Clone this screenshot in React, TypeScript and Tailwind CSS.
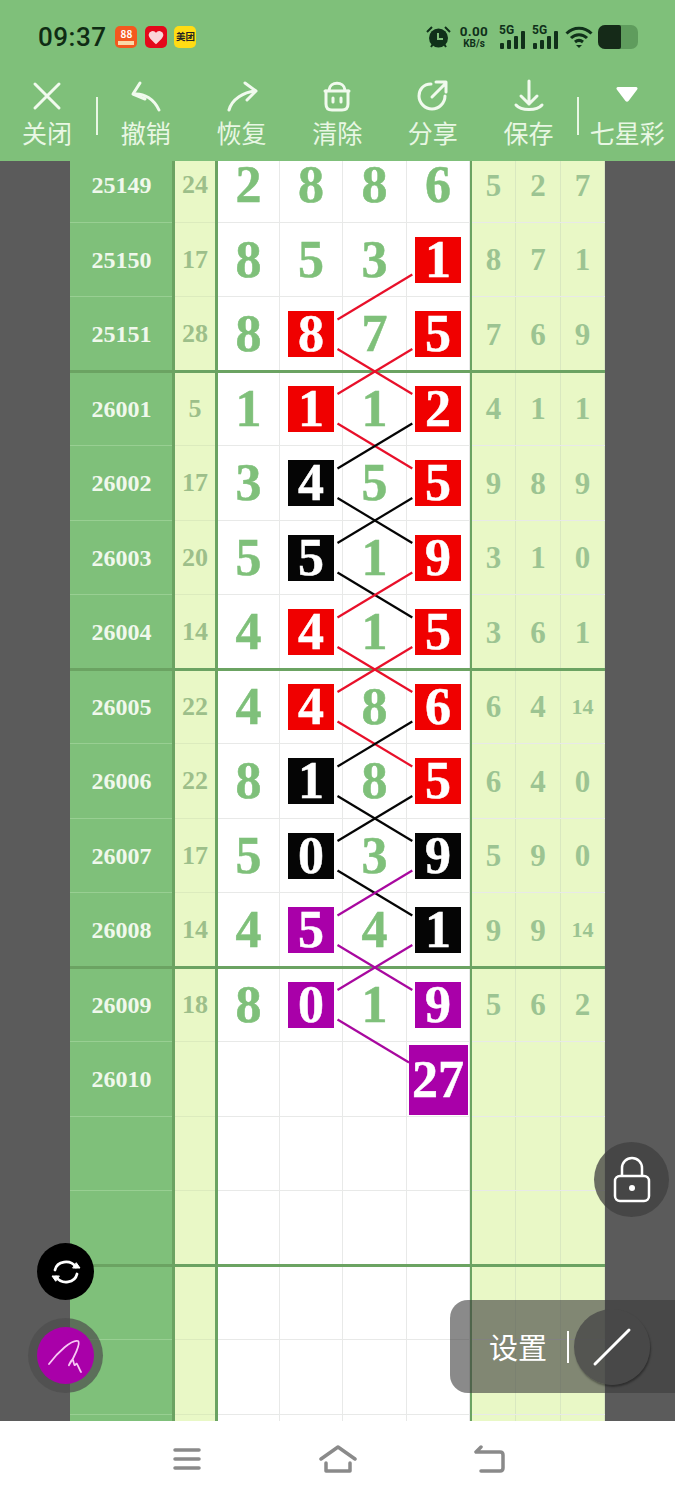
import { ReactNode } from 'react';

type Mark = 'r' | 'k' | 'p' | '';

type Row = {
  id: string;
  sum: string;
  nums: string[];
  marks: Mark[];
  right: string[];
};

const row = (id: string, sum: string, a: string, b: string, c: string, d: string, bm: Mark, dm: Mark, right: string[]): Row => ({
  id,
  sum,
  nums: [a, b, c, d],
  marks: ['', bm, '', dm],
  right,
});

const rows: Row[] = [
  row('25149', '24', '2', '8', '8', '6', '', '', ['5', '2', '7']),
  row('25150', '17', '8', '5', '3', '1', '', 'r', ['8', '7', '1']),
  row('25151', '28', '8', '8', '7', '5', 'r', 'r', ['7', '6', '9']),
  row('26001', '5', '1', '1', '1', '2', 'r', 'r', ['4', '1', '1']),
  row('26002', '17', '3', '4', '5', '5', 'k', 'r', ['9', '8', '9']),
  row('26003', '20', '5', '5', '1', '9', 'k', 'r', ['3', '1', '0']),
  row('26004', '14', '4', '4', '1', '5', 'r', 'r', ['3', '6', '1']),
  row('26005', '22', '4', '4', '8', '6', 'r', 'r', ['6', '4', '14']),
  row('26006', '22', '8', '1', '8', '5', 'k', 'r', ['6', '4', '0']),
  row('26007', '17', '5', '0', '3', '9', 'k', 'k', ['5', '9', '0']),
  row('26008', '14', '4', '5', '4', '1', 'p', 'k', ['9', '9', '14']),
  row('26009', '18', '8', '0', '1', '9', 'p', 'p', ['5', '6', '2']),
  row('26010', '', '', '', '', '27', '', 'p', ['', '', '']),
  row('', '', '', '', '', '', '', '', ['', '', '']),
  row('', '', '', '', '', '', '', '', ['', '', '']),
  row('', '', '', '', '', '', '', '', ['', '', '']),
  row('', '', '', '', '', '', '', '', ['', '', '']),
  row('', '', '', '', '', '', '', '', ['', '', '']),
];

const RED = '#e8102a';
const BLACK = '#050505';
const PURPLE = '#a8089f';

// [row index, left-to-right colour, right-to-left colour]
const crossings: [number, string, string][] = [
  [1, '', RED],
  [2, RED, RED],
  [3, RED, BLACK],
  [4, BLACK, BLACK],
  [5, BLACK, RED],
  [6, RED, RED],
  [7, RED, BLACK],
  [8, BLACK, BLACK],
  [9, BLACK, PURPLE],
  [10, PURPLE, PURPLE],
];

const markClass = {
  r: 'bg-[#f00000]',
  k: 'bg-[#050505]',
  p: 'bg-[#a900a9]',
};

function Cell({ value, mark }: { value: string; mark: Mark }) {
  if (value === '27') {
    return (
      <div className="flex items-center justify-center border-r border-[#e8e9e8] bg-white pt-[2px]">
        <div className="flex h-[70px] w-[59px] shrink-0 items-center justify-center bg-[#a900a9] text-[52px] font-bold text-white [-webkit-text-stroke:0.5px_currentColor]">27</div>
      </div>
    );
  }
  return (
    <div className="flex items-center justify-center border-r border-[#e8e9e8] bg-white pt-px">
      {mark ? (
        <div className={`flex h-[46px] w-[46px] items-center justify-center text-[52px] font-bold text-white [-webkit-text-stroke:0.5px_currentColor] ${markClass[mark]}`}>{value}</div>
      ) : (
        <span className="text-[52px] font-bold text-[#7fc07a] [-webkit-text-stroke:0.5px_currentColor]">{value}</span>
      )}
    </div>
  );
}

function TableRow({ data, index }: { data: Row; index: number }) {
  const thick = (index + 2) % 4 === 0;
  return (
    <div className="relative grid h-[74.5px] grid-cols-[102px_3px_40px_3px_62px_63px_64px_63px_2px_44px_45px_44px] border-b border-[#e8e9e8] leading-none">
      <div className="-mb-px flex items-center justify-center border-b border-[#98cf92] bg-[#7fc07a] pl-px pt-px text-[24px] font-bold text-[#f0f8ec]">{data.id}</div>
      <div className="-mb-px bg-[#6ba362]" />
      <div className="-mb-px flex items-center justify-center border-b border-[#dcebbd] bg-[#e9f8c6] pt-px text-[26px] font-bold text-[#9dbf8a]">{data.sum}</div>
      <div className="-mb-px bg-[#6ba362]" />
      {data.nums.map((n, i) => (
        <Cell key={i} value={n} mark={data.marks[i]} />
      ))}
      <div className="-mb-px bg-[#6ba362]" />
      {data.right.map((n, i) => (
        <div
          key={i}
          className={`flex items-center justify-center border-r border-[#d9e8c0] bg-[#e9f8c6] pt-px font-bold text-[#9cc492] ${n === '14' ? 'text-[22px]' : 'text-[31px]'}`}
        >
          {n}
        </div>
      ))}
      {thick && <div className="absolute inset-x-0 -bottom-[2px] z-[1] h-[3px] bg-[#6ba362]" />}
    </div>
  );
}

function LinkLines() {
  const x1 = 337.5;
  const x2 = 412.3;
  const cy = (i: number) => 185 + 74.5 * i;
  return (
    <svg className="pointer-events-none absolute left-0 top-0 z-[2]" width="675" height="1500" fill="none" strokeWidth="2.2">
      {crossings.map(([i, down, up]) => (
        <g key={i}>
          {down && <line x1={x1} y1={cy(i) + 15} x2={x2} y2={cy(i) + 60} stroke={down} />}
          {up && <line x1={x2} y1={cy(i) + 15} x2={x1} y2={cy(i) + 60} stroke={up} />}
        </g>
      ))}
      <line x1={x1} y1={cy(11) + 15} x2={409} y2={cy(11) + 58} stroke={PURPLE} />
    </svg>
  );
}

function Tool({ label, children }: { label: string; children: ReactNode }) {
  return (
    <div className="flex w-[96px] flex-col items-center">
      <svg width="36" height="36" viewBox="0 0 36 36" fill="none" stroke="#f1faee" strokeWidth="3" strokeLinecap="round" strokeLinejoin="round">
        {children}
      </svg>
      <span className="mt-[1px] text-[25px] leading-[34px] text-[#e9f7e4]">{label}</span>
    </div>
  );
}

function Signal() {
  return (
    <svg width="26" height="26" viewBox="0 0 26 26" fill="#10301a">
      <text x="0" y="10" fontSize="12" fontWeight="700" fontFamily="Roboto, sans-serif">5G</text>
      <rect x="1" y="19" width="4" height="6" rx="1" />
      <rect x="8" y="16" width="4" height="9" rx="1" />
      <rect x="15" y="12" width="4" height="13" rx="1" />
      <rect x="22" y="7" width="4" height="18" rx="1" />
    </svg>
  );
}

function StatusBar() {
  return (
    <div className="flex h-[30px] items-center justify-between pl-[38px] pr-[37px]">
      <div className="flex items-center">
        <span className="text-[26px] font-medium leading-none tracking-[0.5px] text-[#0f2c14] font-['Roboto',sans-serif]">09:37</span>
        <div className="ml-[9px] flex h-[22px] w-[22px] flex-col items-center justify-center rounded-[5px] bg-[#f4581f] text-[8px] font-bold leading-none text-white">
          <span className="text-[10px]">88</span>
          <span className="mt-[2px] h-[4px] w-[16px] bg-[#fbd9a8]" />
        </div>
        <div className="ml-[8px] flex h-[22px] w-[22px] items-center justify-center rounded-[5px] bg-[#e4081a]">
          <svg width="16" height="15" viewBox="0 0 24 22" fill="#fbd5d8">
            <path d="M12 21C5 15 1 11 1 7a6 6 0 0 1 11-3 6 6 0 0 1 11 3c0 4-4 8-11 14z" />
          </svg>
        </div>
        <div className="ml-[7px] flex h-[22px] w-[22px] items-center justify-center rounded-[5px] bg-[#ffdc14] text-[9.5px] font-bold leading-none text-[#222]">美团</div>
      </div>
      <div className="flex items-center">
        <svg width="25" height="24" viewBox="0 0 25 24" fill="#10301a">
          <circle cx="12.5" cy="13" r="9.5" />
          <path d="M1 7l5-5M24 7l-5-5M5 22l2-3M20 22l-2-3" stroke="#10301a" strokeWidth="2" />
          <path d="M12 8v6h5" stroke="#7fc07a" strokeWidth="2" fill="none" />
        </svg>
        <div className="ml-[8px] flex w-[30px] flex-col items-center font-bold leading-none text-[#10301a] font-['Roboto',sans-serif]">
          <span className="text-[13.5px] tracking-[0.3px]">0.00</span>
          <span className="text-[10px]">KB/s</span>
        </div>
        <div className="ml-[10px]">
          <Signal />
        </div>
        <div className="ml-[7px]">
          <Signal />
        </div>
        <svg className="ml-[7px]" width="28" height="24" viewBox="0 0 28 24" fill="none" stroke="#10301a" strokeWidth="3">
          <path d="M1.500 8.500c7-7 18-7 25 0" />
          <path d="M6 13c4.500-4.500 11.500-4.500 16 0" />
          <path d="M10 17c2.400-2 5.600-2 8 0" />
          <path d="M14 23l-3-3h6z" fill="#10301a" stroke="none" />
        </svg>
        <div className="ml-[5px] flex h-[24px] w-[40px] overflow-hidden rounded-[7px] bg-[#5f9c5d]">
          <div className="h-full w-[23px] rounded-r-[2px] bg-[#152a18]" />
        </div>
      </div>
    </div>
  );
}

function Toolbar() {
  return (
    <div className="mt-[26px] flex items-start">
      <div className="-ml-px">
        <Tool label="关闭">
          <path d="M6 6l24 24M30 6L6 30" />
        </Tool>
      </div>
      <div className="mt-[19px] ml-px h-[38px] w-[2px] bg-[#e9f7e4]" />
      <Tool label="撤销">
        <path d="M12 5L5 16l12 5" />
        <path d="M6 16c10-1 20 5 25 16" />
      </Tool>
      <Tool label="恢复">
        <path d="M21 5l11 8-9 9" />
        <path d="M31 13C20 14 8 21 5 32" />
      </Tool>
      <Tool label="清除">
        <path d="M6 13h24M10 12c1-9 15-9 16 0" />
        <path d="M7 13v13c0 4 2 6 6 6h10c4 0 6-2 6-6V13" />
        <path d="M14 20v4M22 20v4" />
      </Tool>
      <Tool label="分享">
        <path d="M16 6C8 6 4 12 4 18c0 7 6 13 13 13s13-6 13-13" />
        <path d="M17 19L31 5M21 4h10v10" />
      </Tool>
      <Tool label="保存">
        <path d="M18 3v23M10 18l8 8 8-8" />
        <path d="M5 27c5 6 21 6 26 0" />
      </Tool>
      <div className="mt-[19px] ml-px h-[38px] w-[2px] bg-[#e9f7e4]" />
      <div className="flex w-[96px] flex-col items-center">
        <svg width="36" height="36" viewBox="0 0 36 36" fill="#ffffff">
          <path d="M9 9h18c1.500 0 2 1.500 1.200 2.500L19.500 23c-.8 1-2.200 1-3 0L7.800 11.500C7 10.500 7.500 9 9 9z" />
        </svg>
        <span className="mt-[1px] text-[25px] leading-[34px] text-[#e9f7e4]">七星彩</span>
      </div>
    </div>
  );
}

export default function App() {
  return (
    <div className="relative flex h-[1500px] w-[675px] flex-col overflow-hidden bg-white font-['Noto_Sans_CJK_SC',sans-serif]">
      <header className="z-10 h-[161px] shrink-0 bg-[#7fc07a] pt-[22px]">
        <StatusBar />
        <Toolbar />
      </header>

      <main className="h-[1260px] shrink-0 overflow-hidden bg-[#5b5b5b] pl-[70px] font-['Liberation_Serif',serif]">
        <div className="-mt-[13px] w-[535px]">
          {rows.map((r, i) => (
            <TableRow key={i} data={r} index={i} />
          ))}
        </div>
      </main>

      <nav className="z-10 flex h-[79px] shrink-0 items-center bg-white pb-[4px]">
        <svg className="ml-[172px]" width="30" height="24" viewBox="0 0 30 24" fill="none" stroke="#8a8a8a" strokeWidth="3.500" strokeLinecap="round">
          <path d="M3 3h24M3 12h24M3 21h24" />
        </svg>
        <svg className="ml-[117px]" width="38" height="30" viewBox="0 0 38 30" fill="none" stroke="#8a8a8a" strokeWidth="3.500" strokeLinecap="round" strokeLinejoin="round">
          <path d="M2 15L19 3l17 12" />
          <path d="M7 19v8h24v-8" />
        </svg>
        <svg className="ml-[116px]" width="32" height="28" viewBox="0 0 32 28" fill="none" stroke="#8a8a8a" strokeWidth="3.500" strokeLinecap="round" strokeLinejoin="round">
          <path d="M8 2L3 7h24c2 0 3 1 3 3v13c0 2-1 3-3 3H8" />
        </svg>
      </nav>

      <LinkLines />

      {/* floating buttons */}
      <div className="absolute left-[37px] top-[1243px] z-20 flex h-[57px] w-[57px] items-center justify-center rounded-full bg-black">
        <svg width="32" height="32" viewBox="0 0 32 32" fill="none" stroke="#fff" strokeWidth="2.800" strokeLinecap="round">
          <path d="M5 14C7 5 20 3 26 11" />
          <path d="M27 18C25 27 12 29 6 21" />
          <path d="M23 12h7l-3.500-5zM9 20H2l3.500 5z" fill="#fff" strokeWidth="1" />
        </svg>
      </div>
      <div className="absolute left-[28px] top-[1318px] z-20 flex h-[75px] w-[75px] items-center justify-center rounded-full bg-[#4d4d4d]/70">
        <div className="flex h-[57px] w-[57px] items-center justify-center rounded-full bg-[#a900a9]">
          <svg width="40" height="40" viewBox="0 0 40 40" fill="none" stroke="#f8c8f4" strokeWidth="1.800" strokeLinecap="round" strokeLinejoin="round">
            <path d="M3 28C12 16 26 3 32 5C35 7 28 22 23 29C22 31 26 22 27 24C28 27 28 31 30 28C31 26 33 33 35 36" />
          </svg>
        </div>
      </div>
      <div className="absolute left-[594px] top-[1142px] z-20 flex h-[75px] w-[75px] items-center justify-center rounded-full bg-[#3f3f3f]/75">
        <svg width="38" height="48" viewBox="0 0 38 48" fill="none" stroke="#fff" strokeWidth="2.500">
          <path d="M9 20v-8a10 10 0 0 1 20 0v8" />
          <rect x="2" y="20" width="34" height="25" rx="5" />
          <circle cx="19" cy="32" r="3" fill="#fff" stroke="none" />
        </svg>
      </div>
      <div className="absolute left-[450px] top-[1300px] z-20 flex h-[93px] w-[225px] items-center rounded-l-[18px] bg-[#3c3c3c]/60 pl-[39px]">
        <span className="text-[29px] leading-none text-white">设置</span>
        <span className="ml-[20px] h-[32px] w-[2px] bg-white" />
        <div className="ml-[5px] flex h-[76px] w-[76px] items-center justify-center rounded-full bg-[#484848]/80 shadow-[1px_2px_2px_rgba(0,0,0,0.35)]">
          <svg width="40" height="40" viewBox="0 0 40 40" stroke="#fff" strokeWidth="3" strokeLinecap="round">
            <path d="M3 37L37 3" />
          </svg>
        </div>
      </div>
    </div>
  );
}
